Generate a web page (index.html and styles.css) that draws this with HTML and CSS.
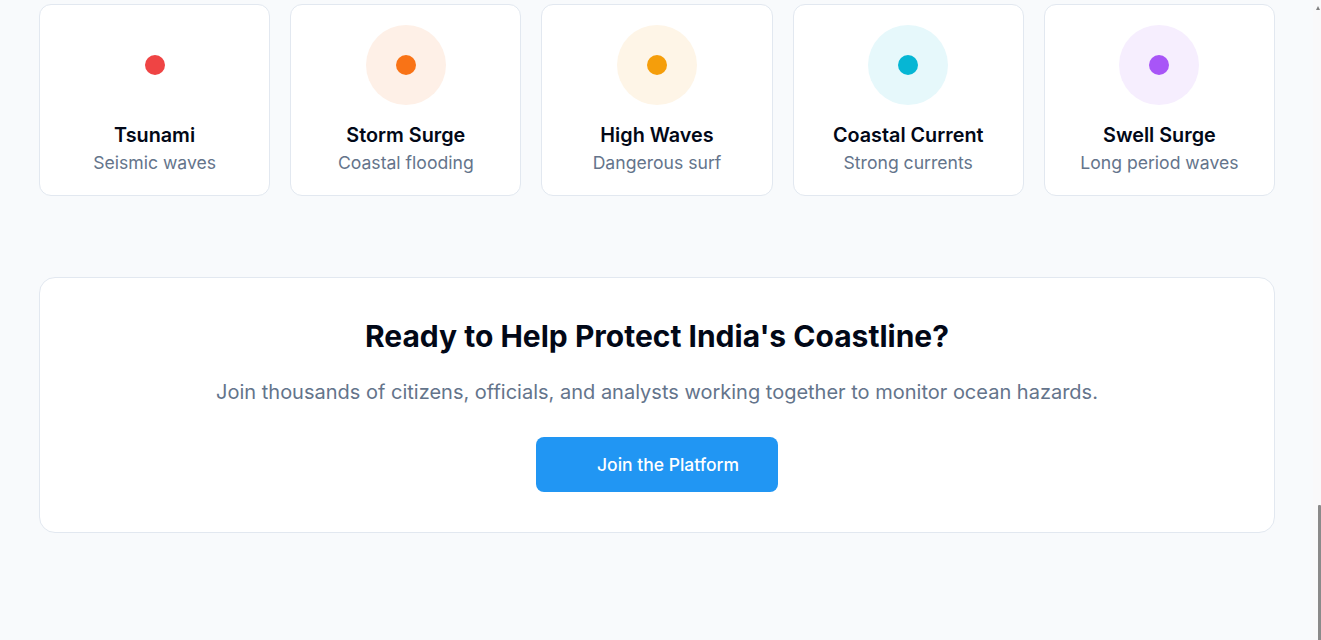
FILE: index.html
```html
<!DOCTYPE html>
<html lang="en">
<head>
<meta charset="utf-8">
<title>Ocean Hazards</title>
<link rel="stylesheet" href="styles.css">
</head>
<body>
<div class="page">
  <main class="main">
    <section class="hazards">
      <div class="hazard">
        <div class="hz-icon hz-red"><span class="dot"></span></div>
        <h3 class="hz-title">Tsunami</h3>
        <p class="hz-sub">Seismic waves</p>
      </div>
      <div class="hazard">
        <div class="hz-icon hz-orange"><span class="dot"></span></div>
        <h3 class="hz-title">Storm Surge</h3>
        <p class="hz-sub">Coastal flooding</p>
      </div>
      <div class="hazard">
        <div class="hz-icon hz-amber"><span class="dot"></span></div>
        <h3 class="hz-title">High Waves</h3>
        <p class="hz-sub">Dangerous surf</p>
      </div>
      <div class="hazard">
        <div class="hz-icon hz-cyan"><span class="dot"></span></div>
        <h3 class="hz-title">Coastal Current</h3>
        <p class="hz-sub">Strong currents</p>
      </div>
      <div class="hazard">
        <div class="hz-icon hz-purple"><span class="dot"></span></div>
        <h3 class="hz-title">Swell Surge</h3>
        <p class="hz-sub">Long period waves</p>
      </div>
    </section>

    <section class="cta">
      <h2 class="cta-title">Ready to Help Protect India's Coastline?</h2>
      <p class="cta-text">Join thousands of citizens, officials, and analysts working together to monitor ocean hazards.</p>
      <button class="cta-btn" type="button"><span class="btn-icon"></span><span>Join the Platform</span></button>
    </section>
  </main>
  <aside class="scrollbar">
    <span class="sb-arrow"></span>
    <span class="sb-thumb"></span>
  </aside>
</div>
</body>
</html>
```

FILE: styles.css
```css
* { box-sizing: border-box; }
html, body { margin: 0; padding: 0; }
body {
  font-family: Inter, "Noto Sans", "Liberation Sans", sans-serif;
  background: #f8fafc;
  color: #0f172a;
  height: 640px;
  overflow: hidden;
}
.page {
  display: flex;
  height: 640px;
}
.main {
  flex: 1;
  padding: 4px 38px 0 39px;
}
.hazards {
  display: grid;
  grid-template-columns: repeat(5, 1fr);
  gap: 20px;
}
.hazard {
  height: 192px;
  background: #ffffff;
  border: 1px solid #e2e8f0;
  border-radius: 12px;
  padding: 20px 12px 18px;
  display: flex;
  flex-direction: column;
  align-items: center;
}
.hz-icon {
  width: 80px;
  height: 80px;
  border-radius: 50%;
  display: flex;
  align-items: center;
  justify-content: center;
  flex-shrink: 0;
}
.dot {
  width: 20px;
  height: 20px;
  border-radius: 50%;
}
.hz-red .dot { background: #ef4444; }
.hz-orange { background: #fef0e7; }
.hz-orange .dot { background: #f97316; }
.hz-amber { background: #fef5e7; }
.hz-amber .dot { background: #f59e0b; }
.hz-cyan { background: #e6f8fb; }
.hz-cyan .dot { background: #06b6d4; }
.hz-purple { background: #f6eefe; }
.hz-purple .dot { background: #a855f7; }
.hz-title {
  margin: 16px 0 0;
  font-size: 19.8px;
  line-height: 28px;
  font-weight: 600;
  color: #020817;
  white-space: nowrap;
}
.hz-sub {
  margin: 1px 0 0;
  font-size: 17.6px;
  line-height: 26px;
  color: #64748b;
  white-space: nowrap;
}
.cta {
  margin-top: 81px;
  background: #ffffff;
  border: 1px solid #e2e8f0;
  border-radius: 16px;
  padding: 40px;
  display: flex;
  flex-direction: column;
  align-items: center;
  text-align: center;
}
.cta-title {
  margin: 0;
  font-size: 30px;
  line-height: 36px;
  font-weight: 700;
  color: #020817;
}
.cta-text {
  margin: 24px 0 31px;
  font-size: 20px;
  line-height: 28px;
  color: #64748b;
}
.cta-btn {
  height: 55px;
  width: 242px;
  border: 0;
  border-radius: 8px;
  background: #2196f3;
  color: #ffffff;
  font-family: inherit;
  font-size: 17.5px;
  font-weight: 500;
  display: flex;
  align-items: center;
  justify-content: flex-start;
  gap: 8px;
  padding: 0 20px 0 33px;
}
.btn-icon {
  width: 20px;
  height: 20px;
  flex-shrink: 0;
}
.scrollbar {
  width: 8px;
  flex-shrink: 0;
  background: #f9f9fa;
  position: relative;
}
.sb-arrow {
  position: absolute;
  top: 6px;
  left: 3px;
  width: 0;
  height: 0;
  border-left: 2.5px solid transparent;
  border-right: 2.5px solid transparent;
  border-bottom: 4px solid #808080;
}
.sb-thumb {
  position: absolute;
  top: 505px;
  bottom: 0;
  left: 5px;
  width: 3px;
  background: #8a8a8a;
  border-radius: 1px 1px 0 0;
}
```
